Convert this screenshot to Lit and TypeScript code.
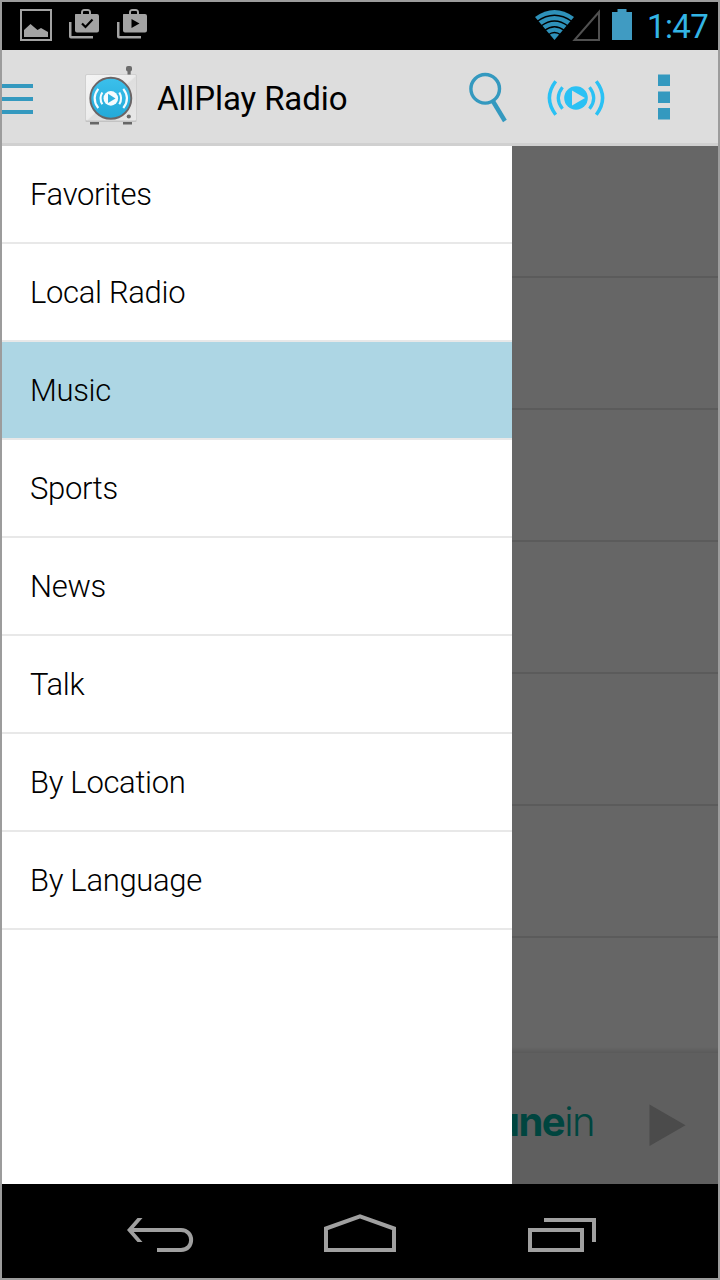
import { LitElement, html, css, svg } from "lit";
import { customElement, property, state } from "lit/decorators.js";
import { classMap } from "lit/directives/class-map.js";

@customElement("status-bar")
class StatusBar extends LitElement {
  static styles = css`
    :host { display: flex; height: 48px; background: #000; justify-content: space-between; }
    svg { display: block; }
    .right { display: flex; }
    .clock { font: 400 33px/49px Roboto, sans-serif; letter-spacing: -0.6px; color: #33b5e5; width: 71px; white-space: nowrap; }
  `;
  private bag(x: number, glyph: unknown) {
    return svg`<g transform="translate(${x} 0)" fill="#a3a3a3">
      <path d="M1 22v14.500q0 2 2 2H25v-2.500H3.500V22z"/>
      <path fill-rule="evenodd" d="M7.500 14H13v-1.500q0-3.500 3.500-3.500h3q3.500 0 3.500 3.500V14h6q2 0 2 2v14.500q0 2-2 2H9q-2 0-2-2V14.500zM15 14h6v-2q0-1-1-1h-4q-1 0-1 1z"/>
      ${glyph}</g>`;
  }
  render() {
    return html`
      <svg width="160" height="48" viewBox="2 2 160 48">
        <path d="M21 10H51V40H21z" fill="none" stroke="#a3a3a3" stroke-width="2"/>
        <path d="M24 37V30L30.500 24L37.500 30L41 28L48 32V37z" fill="#a3a3a3"/>
        ${this.bag(68, svg`<path d="M14 23.500l3.500 3.500 7-7.500" fill="none" stroke="#000" stroke-width="2.200"/>`)}
        ${this.bag(116, svg`<path d="M15.500 19v9l8-4.500z" fill="#000"/>`)}
      </svg>
      <div class="right">
        <svg width="117" height="48" viewBox="530 2 117 48">
          <path d="M554.500 40L535 17Q554.500 3 574 17z" fill="#2e91b9"/>
          <g fill="none" stroke="#000" stroke-width="1.300">
            <path d="M537 21.500Q554.500 9 572 21.500M541 26Q554.500 16 568 26M544.500 30.500Q554.500 23 564.500 30.500M548 35Q554.500 30 561 35"/>
          </g>
          <path d="M574.500 40H599V12z" fill="none" stroke="#505050" stroke-width="2"/>
          <path d="M612 12h5.500V9h9v3h5.500v28h-20z" fill="#409bc2"/>
        </svg>
        <span class="clock">1:47</span>
      </div>`;
  }
}

@customElement("action-bar")
class ActionBar extends LitElement {
  @property() heading = "";
  static styles = css`
    :host { display: flex; height: 93px; background: #ddd; border-bottom: 3px solid #d0d0d0; justify-content: space-between; align-items: flex-start; }
    svg { display: block; }
    .brand { display: flex; }
    h1 { margin: 0; font: 400 33px/98px Roboto, sans-serif; letter-spacing: -0.1px; color: #000; white-space: nowrap; }
  `;
  render() {
    return html`
      <div class="brand">
        <svg width="155" height="93" viewBox="2 50 155 93">
          <defs>
            <linearGradient id="box" x1="0" y1="0" x2="1" y2="1"><stop offset="0" stop-color="#f4f4f4"/><stop offset=".5" stop-color="#ececec"/><stop offset=".52" stop-color="#dedede"/><stop offset="1" stop-color="#e8e8e8"/></linearGradient>
            <linearGradient id="dial" x1="0" y1="0" x2="0" y2="1"><stop offset="0" stop-color="#3bc0ec"/><stop offset="1" stop-color="#23a9d8"/></linearGradient>
          </defs>
          <path d="M2 84h31v4H2zM2 97h31v4H2zM2 110h31v4H2z" fill="#3499bf"/>
          <rect x="126" y="66" width="6" height="5.500" rx="2" fill="#6c6c6c"/>
          <path d="M127.500 70.500h3.200v4.500h-3.200z" fill="#6c6c6c"/>
          <path d="M90 122h9v2.500h-9zM123 122h9v2.500h-9z" fill="#666"/>
          <rect x="85.500" y="74.500" width="51" height="47.500" rx="1" fill="#c3c3c3"/>
          <rect x="86" y="75" width="50" height="45.500" rx="1" fill="url(#box)"/>
          <circle cx="110.800" cy="98.300" r="20.500" fill="url(#dial)" stroke="#6b6566" stroke-width="1.900"/>
          <circle cx="110.800" cy="98.400" r="7.300" fill="#f5fbfe"/>
          <path d="M108 93.800v9.200l7.500-4.600z" fill="#2fb1de"/>
          <g fill="none" stroke="#f5fbfe" stroke-width="2.100">
            <path d="M102.300 92.500q-3.600 5.900 0 11.800M98.300 88.800q-7.400 9.600 0 19.200M119.300 92.500q3.600 5.900 0 11.800M123.300 88.800q7.400 9.600 0 19.200"/>
          </g>
          <circle cx="128.800" cy="116.500" r="2.100" fill="#686868"/>
        </svg>
        <h1>${this.heading}</h1>
      </div>
      <svg width="258" height="93" viewBox="460 50 258 93">
        <circle cx="485.200" cy="88.800" r="14.300" fill="none" stroke="#3499bf" stroke-width="3.400"/>
        <path d="M492.800 101L504.900 121" stroke="#3499bf" stroke-width="4.400"/>
        <circle cx="576" cy="98" r="11.800" fill="#2ac1f4"/>
        <path d="M572 90.500v15l13-7.500z" fill="#ddd"/>
        <g fill="none" stroke="#2ac1f4">
          <path stroke-width="3.200" d="M562.500 87.200q-8.500 10.800 0 21.600M589.500 87.200q8.500 10.800 0 21.600"/>
          <path stroke-width="3.500" d="M555.700 81.300q-12.600 16.700 0 33.400M596.300 81.300q12.600 16.700 0 33.400"/>
        </g>
        <path d="M658 74.500h12v11.500h-12zM658 91.500h12v11.500h-12zM658 108h12v11.500h-12z" fill="#3499bf"/>
      </svg>`;
  }
}

@customElement("nav-drawer")
class NavDrawer extends LitElement {
  @property({ type: Array }) items: string[] = [];
  @state() private selected = "Music";
  static styles = css`
    :host { display: block; width: 510px; background: #fff; }
    .item { box-sizing: border-box; height: 98px; padding-left: 28px; border-bottom: 2px solid #e8e8e8; font: 300 31px/98px Roboto, sans-serif; letter-spacing: -0.32px; color: #000; white-space: nowrap; cursor: pointer; }
    .selected { background: #add6e4; }
  `;
  render() {
    return this.items.map(
      (i) => html`<div class=${classMap({ item: true, selected: i === this.selected })} @click=${() => (this.selected = i)}>${i}</div>`
    );
  }
}

@customElement("player-pane")
class PlayerPane extends LitElement {
  static styles = css`
    :host { display: flex; flex-direction: column; flex: 1; min-width: 0; background: #666; overflow: hidden; }
    .rows { flex: none; height: 901px; overflow: hidden; }
    .row { box-sizing: border-box; height: 132px; border-bottom: 2px solid #5b5b5b; }
    .edge { flex: none; height: 6px; background: linear-gradient(#666, #5a5a5a); }
    .player { flex: none; height: 131px; background: #5f5f5f; display: flex; justify-content: space-between; }
    .logo { display: flex; justify-content: flex-end; width: 82px; overflow: hidden; font: 700 40px/138px Inter, sans-serif; letter-spacing: -1.5px; color: #00453f; white-space: nowrap; }
    .thin { font-weight: 300; }
    svg { display: block; }
  `;
  render() {
    return html`
      <div class="rows">${Array.from({ length: 7 }, () => html`<div class="row"></div>`)}</div>
      <div class="edge"></div>
      <div class="player">
        <div class="logo"><span>tune<span class="thin">in</span></span></div>
        <svg width="78" height="131" viewBox="640 1053 78 131"><path d="M649.500 1104.500v41.500l36-20.700z" fill="#4b4b4b"/></svg>
      </div>`;
  }
}

@customElement("system-keys")
class SystemKeys extends LitElement {
  static styles = css`
    :host { display: flex; height: 94px; background: #000; }
    svg { display: block; }
  `;
  render() {
    return html`
      <svg width="716" height="94" viewBox="2 1184 716 94" fill="none" stroke="#a0a0a0" stroke-width="4">
        <path d="M130 1230H181C194.500 1230 194.500 1250 181 1250H157"/>
        <path d="M127 1230L137.500 1218H142.500L132 1230L142.500 1242H137.500z" fill="#a0a0a0" stroke="none"/>
        <path d="M326 1250V1228.500L360 1216.300L394 1228.500V1250z"/>
        <path d="M530 1230H582V1250H530zM544 1220H594V1242"/>
      </svg>`;
  }
}

@customElement("app-root")
class AppRoot extends LitElement {
  static styles = css`
    :host { display: flex; flex-direction: column; box-sizing: border-box; width: 720px; height: 1280px; border: 2px solid #9c9c9c; overflow: hidden; }
    .main { display: flex; flex: 1; min-height: 0; }
  `;
  private items = ["Favorites", "Local Radio", "Music", "Sports", "News", "Talk", "By Location", "By Language"];
  render() {
    return html`
      <status-bar></status-bar>
      <action-bar heading="AllPlay Radio"></action-bar>
      <div class="main"><nav-drawer .items=${this.items}></nav-drawer><player-pane></player-pane></div>
      <system-keys></system-keys>`;
  }
}
